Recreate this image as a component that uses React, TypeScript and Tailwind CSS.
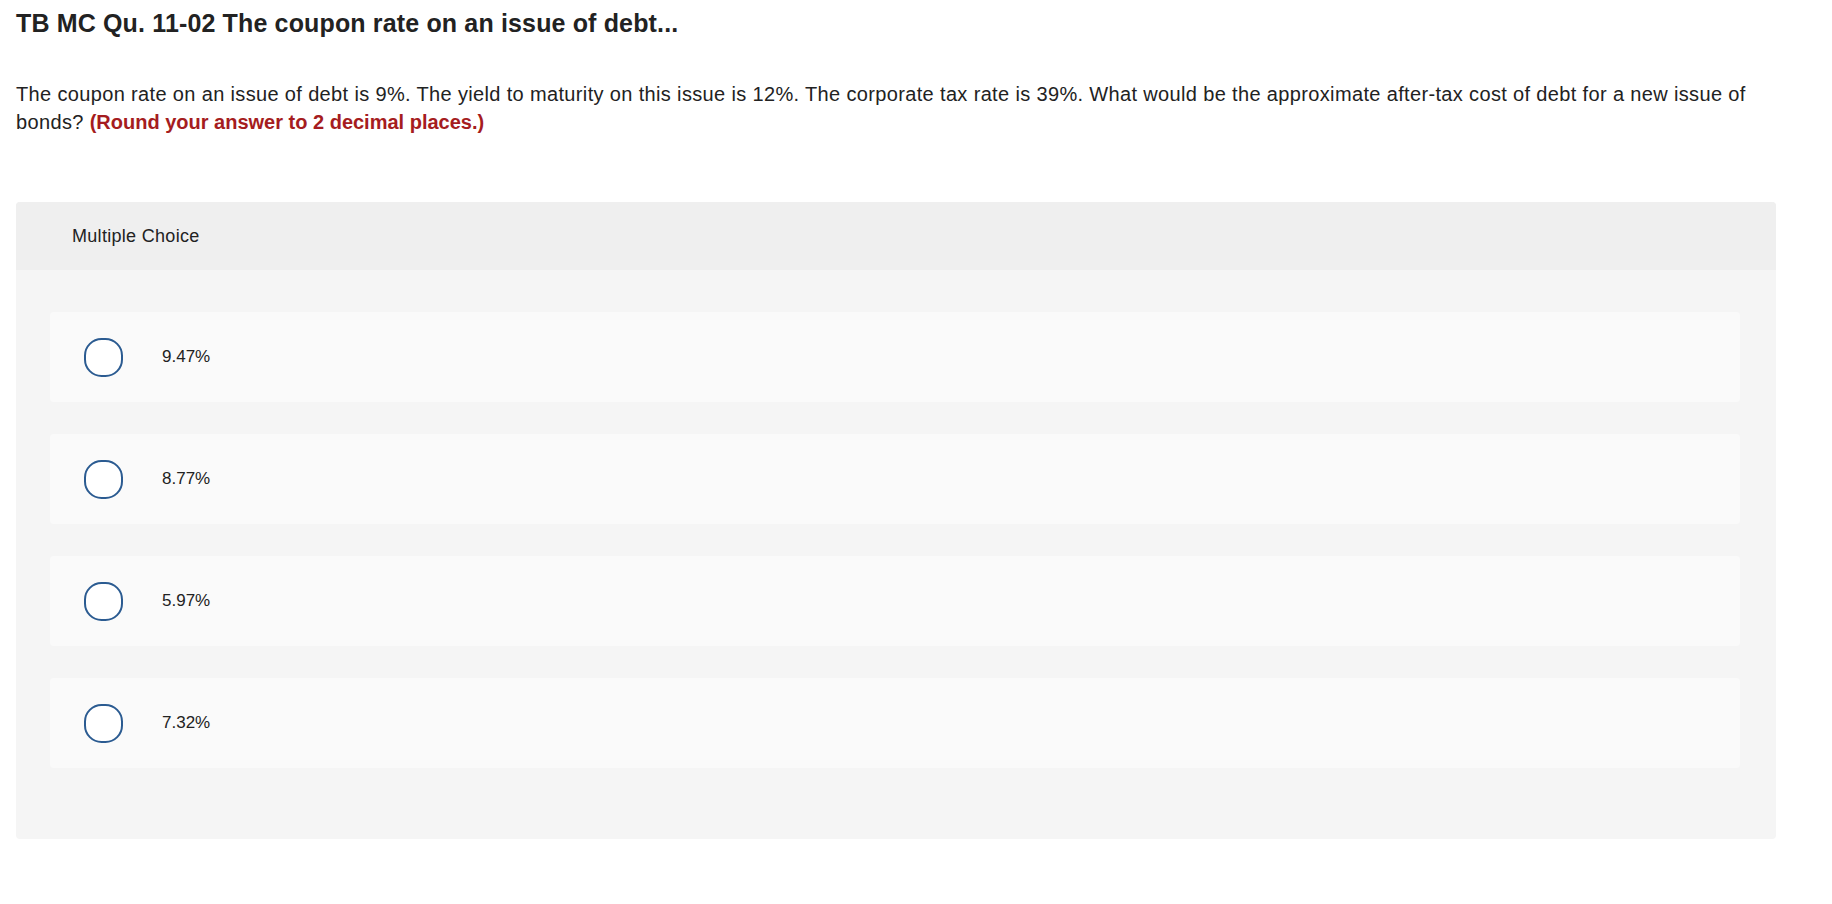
import React from "react";

const options = ["9.47%", "8.77%", "5.97%", "7.32%"];

export default function App() {
  return (
    <div
      className="min-h-screen bg-white text-[#1f1f1f] pl-4"
      style={{ fontFamily: '"Liberation Sans", Arial, sans-serif' }}
    >
      <h1 className="pt-2 text-[25px] leading-[30px] font-bold text-[#222] tracking-[0.15px]">
        TB MC Qu. 11-02 The coupon rate on an issue of debt...
      </h1>
      <p className="mt-[42px] w-[1800px] text-[20px] leading-[28px] tracking-[0.35px] text-[#222]">
        The coupon rate on an issue of debt is 9%. The yield to maturity on this issue is 12%. The corporate tax
        rate is 39%. What would be the approximate after-tax cost of debt for a new issue of
        <br />
        bonds?{" "}
        <span className="font-bold text-[#a51c20] tracking-[0px]">(Round your answer to 2 decimal places.)</span>
      </p>
      <div className="mt-[66px] w-[1760px] rounded-[4px] overflow-hidden bg-[#f5f5f5]">
        <div className="h-[68px] bg-[#efefef] flex items-center pl-[56px] text-[18px] tracking-[0.3px] text-[#222]">
          Multiple Choice
        </div>
        <div className="pt-[42px] pb-[71px] pl-[34px] pr-[36px] flex flex-col gap-[32px]">
          {options.map((o) => (
            <div
              key={o}
              className="h-[90px] rounded-[4px] bg-[#fafafa] flex items-center pl-[34px]"
            >
              <div className="w-[39px] h-[39px] rounded-[45%] border-[2.5px] border-[#2b5b91] bg-white" />
              <span className="ml-[39px] text-[17px] text-[#222]">{o}</span>
            </div>
          ))}
        </div>
      </div>
    </div>
  );
}
